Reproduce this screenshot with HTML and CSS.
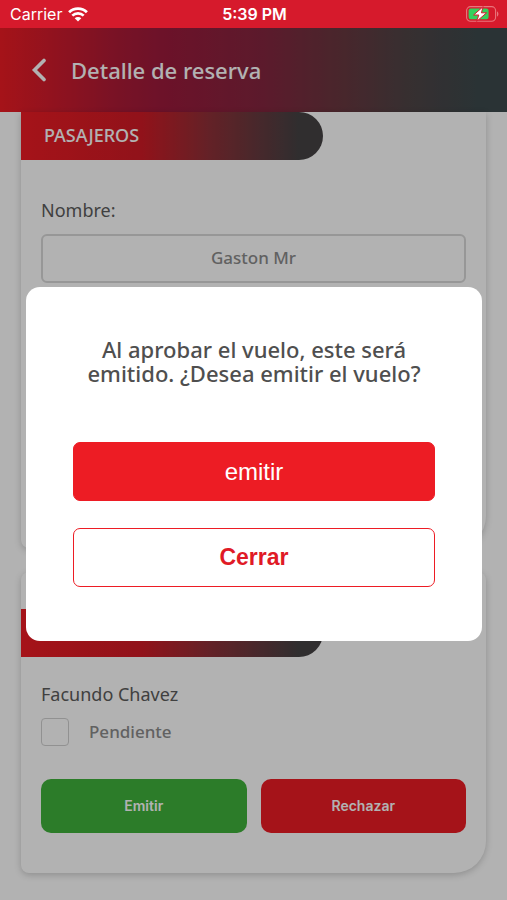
FILE: index.html
```html
<!DOCTYPE html>
<html lang="es">
<head>
  <meta charset="utf-8">
  <meta name="viewport" content="width=device-width, initial-scale=1">
  <title>Detalle de reserva</title>
  <link rel="stylesheet" href="styles.css">
</head>
<body>
  <div class="status">
    <div class="status-left">
      <span>Carrier</span>
      <svg class="wifi" viewBox="0 0 20 15" aria-hidden="true">
        <path d="M1.1 5.3a12.6 12.6 0 0 1 17.8 0" fill="none" stroke="#fff" stroke-width="2.8"/>
        <path d="M4.3 8.7a8.1 8.1 0 0 1 11.4 0" fill="none" stroke="#fff" stroke-width="2.6"/>
        <path d="M10 14.6 6.7 11.3a4.7 4.7 0 0 1 6.6 0z" fill="#fff"/>
      </svg>
    </div>
    <span class="status-time">5:39 PM</span>
    <div class="status-right">
      <svg class="battery" viewBox="0 0 33 16" aria-hidden="true">
        <rect x="0.6" y="0.6" width="29" height="14.6" rx="4" fill="none" stroke="#e9757c" stroke-width="1.1"/>
        <path d="M31 5.4c1.9.6 1.9 4.4 0 5z" fill="#e9757c"/>
        <rect x="2.6" y="2.6" width="20" height="10.6" rx="2.2" fill="#34d05c"/>
        <path d="M17.2 0.6 7.6 9h5.2l-2.2 6.4 10-8.6h-5.2z" fill="#fff" stroke="#d61a2c" stroke-width="1"/>
      </svg>
    </div>
  </div>

  <div class="screen">
    <header class="header">
      <button class="back" type="button" aria-label="Volver">
        <svg viewBox="0 0 16 24" aria-hidden="true"><path d="M13 2.5 3.500 12l9.500 9.500" fill="none" stroke="#fff" stroke-width="3.600" stroke-linecap="round" stroke-linejoin="miter"/></svg>
      </button>
      <h1 class="header-title">Detalle de reserva</h1>
    </header>

    <main class="content">
      <section class="card card-passengers">
        <h2 class="band">PASAJEROS</h2>
        <div class="card-body">
          <label class="label" for="nombre">Nombre:</label>
          <input class="field" id="nombre" type="text" value="Gaston Mr">
        </div>
      </section>

      <section class="card card-approval">
        <div class="band"></div>
        <div class="card-body">
          <p class="label">Facundo Chavez</p>
          <label class="check"><input type="checkbox"><span>Pendiente</span></label>
          <div class="actions">
            <button class="action action-issue" type="button">Emitir</button>
            <button class="action action-reject" type="button">Rechazar</button>
          </div>
        </div>
      </section>
    </main>

    <div class="backdrop">
      <div class="dialog" role="dialog" aria-modal="true" aria-labelledby="question">
        <p class="question" id="question">Al aprobar el vuelo, este será emitido. ¿Desea emitir el vuelo?</p>
        <button class="choice choice-primary" type="button">emitir</button>
        <button class="choice choice-secondary" type="button">Cerrar</button>
      </div>
    </div>
  </div>
</body>
</html>
```

FILE: styles.css
```css
* {
  box-sizing: border-box;
}

body {
  display: flex;
  flex-direction: column;
  min-height: 100vh;
  margin: 0;
  background: #fff;
  color: #4f4f4f;
  font-family: "Noto Sans", sans-serif;
}

h1,
h2,
p {
  margin: 0;
  font-weight: 500;
}

button {
  border: 0;
  padding: 0;
  cursor: pointer;
}

.status {
  display: grid;
  grid-template-columns: 1fr auto 1fr;
  align-items: center;
  height: 28px;
  padding: 0 8px 0 10px;
  background: #d61a2c;
  color: #fff;
  font: 400 16px/28px Inter, sans-serif;
}

.status-left {
  display: flex;
  align-items: center;
  gap: 6px;
}

.status-time {
  font-weight: 600;
}

.status-right {
  display: flex;
  justify-content: flex-end;
}

.wifi {
  width: 20px;
  height: 15px;
}

.battery {
  width: 33px;
  height: 16px;
}

.screen {
  position: relative;
  flex: 1;
}

.header {
  display: flex;
  align-items: center;
  gap: 24px;
  height: 84px;
  padding: 0 32px 1px 31px;
  background: linear-gradient(90deg, #ed1c24 0%, #b01a35 22%, #9c1a3c 32%, #84263f 52%, #6b363f 66%, #504446 80%, #3d494c 94%);
  color: #fff;
}

.back {
  display: flex;
  background: none;
}

.back svg {
  width: 16px;
  height: 24px;
}

.header-title {
  font-size: 22px;
  line-height: 28px;
}

.content {
  display: flex;
  flex-direction: column;
  gap: 24px;
  padding: 0 21px 27px;
}

.card {
  border-radius: 0 0 32px 8px;
  background: #fff;
  box-shadow: 0 2px 7px rgba(0, 0, 0, 0.2);
}

.card-passengers {
  min-height: 436px;
}

.card-approval {
  padding-top: 37px;
  border-radius: 8px 8px 32px 8px;
}

.band {
  width: 65%;
  height: 48px;
  padding-left: 23px;
  border-radius: 0 24px 24px 0;
  background: linear-gradient(90deg, #ed1c24 0%, #d01b26 40%, #903038 62%, #454244 92%);
  color: #fff;
  font-size: 18px;
  line-height: 46px;
}

.card-body {
  display: flex;
  flex-direction: column;
  padding: 0 20px 40px;
}

.label {
  margin-top: 23px;
  color: #5c5c5c;
  font-size: 18px;
  font-weight: 400;
  line-height: 28px;
}

.card-passengers .label {
  margin-top: 36px;
}

.field {
  width: 100%;
  height: 49px;
  margin-top: 10px;
  padding: 0 2px 2px;
  border: 2px solid #d8d8d8;
  border-radius: 6px;
  background: #fff;
  color: #8c8c8c;
  font: 500 17px "Noto Sans", sans-serif;
  text-align: center;
}

.check {
  display: flex;
  align-items: center;
  gap: 20px;
  margin-top: 10px;
  color: #8c8c8c;
  font-size: 17px;
  font-weight: 500;
  line-height: 28px;
}

.check input {
  width: 28px;
  height: 28px;
  margin: 0;
  border: 1px solid #d0d0d0;
  border-radius: 4px;
  appearance: none;
}

.actions {
  display: grid;
  grid-template-columns: 1fr 1fr;
  gap: 14px;
  margin-top: 33px;
}

.action {
  height: 54px;
  padding-bottom: 2px;
  border-radius: 10px;
  color: #fff;
  font: 600 14px Inter, sans-serif;
}

.action-issue {
  background: #40b23b;
}

.action-reject {
  background: #ed1c24;
}

.backdrop {
  position: absolute;
  inset: 0;
  display: flex;
  align-items: center;
  justify-content: center;
  padding: 0 25px 0 26px;
  background: rgba(0, 0, 0, 0.3);
}

.dialog {
  display: flex;
  flex-direction: column;
  width: 100%;
  padding: 50px 47px 54px;
  border-radius: 14px;
  background: #fff;
}

.question {
  margin-bottom: 57px;
  font-size: 22px;
  line-height: 24px;
  text-align: center;
}

.choice {
  height: 59px;
  border: 1px solid #ed1c24;
  border-radius: 7px;
  font: 400 24px "Liberation Sans", sans-serif;
}

.choice-primary {
  background: #ed1c24;
  color: #fff;
}

.choice-secondary {
  margin-top: 27px;
  background: #fff;
  color: #e01a26;
  font-size: 23px;
  font-weight: 700;
}
```
